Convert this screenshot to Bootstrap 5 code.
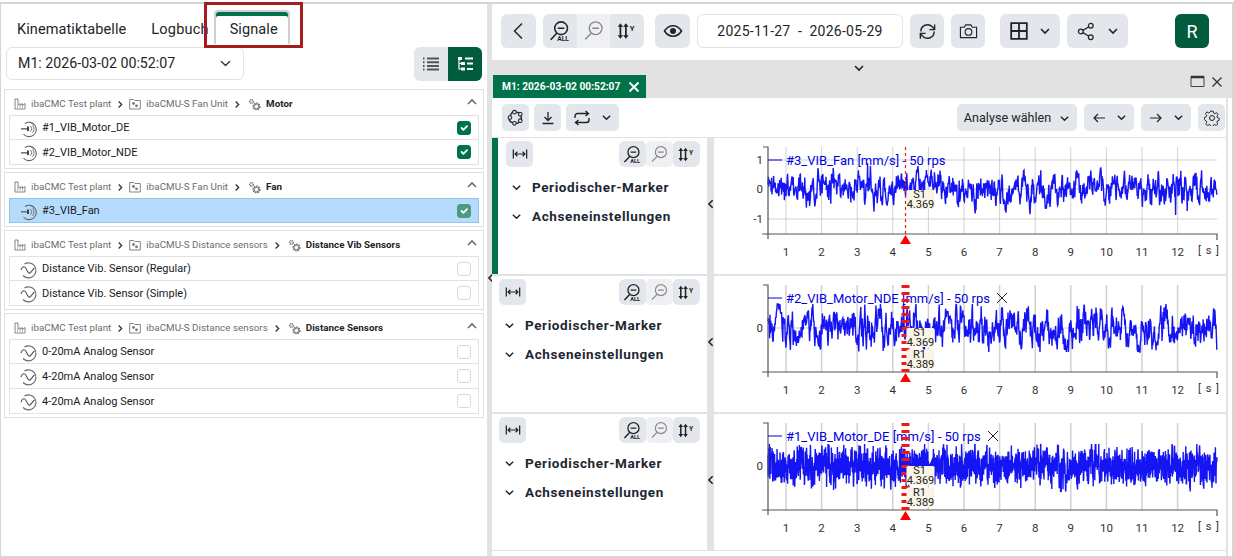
<!DOCTYPE html>
<html lang="de">
<head>
<meta charset="UTF-8">
<title>Signale</title>
<link href="https://cdn.jsdelivr.net/npm/bootstrap@5.3.3/dist/css/bootstrap.min.css" rel="stylesheet">
<style>
    html, body { width: 1234px; height: 558px; overflow: hidden; }
    body { font-family: Roboto, "Liberation Sans", sans-serif; color: #212529; background: #fff; }
    svg { display: block; }
    .app-shell { margin-top: 2px; height: 556px; border: 2px solid #d6d6d6; border-left-width: 1px; display: flex; }

    /* left side */
    .side-pane { width: 486px; flex: none; position: relative; padding: 0 3px 0 3px; }
    .side-tabs { height: 41px; padding: 6px 0 0 0; position: relative; }
    .side-tab { font-size: 14.5px; letter-spacing: .1px; color: #212529; padding: 9px 0 0 0; height: 34px; }
    .side-tab.first { padding-left: 13px; margin-right: 25px; }
    .side-tab.second { margin-right: 5px; letter-spacing: .2px; }
    .side-tab.on { width: 76px; text-align: center; border: 2px solid #cfcfcf; border-bottom: 0; border-radius: 4px 4px 0 0; box-shadow: inset 0 4px 0 #00734a; padding: 7px 0 0 4px; background: #fff; }
    .red-frame { position: absolute; left: 200px; top: -2px; width: 99px; height: 46px; border: 3px solid #a51c1c; pointer-events: none; }
    .picker-row { padding: 2px 2px 0 2px; height: 44px; margin-bottom: 0; }
    .run-select { width: 238px; height: 33px; font-size: 14.2px; padding: 0 11px; border-color: #e3e3e3; border-radius: 6px; color: #212529; background-position: right 12px center; background-size: 11px 11px; }
    .view-toggle { width: 68px; height: 34px; border-radius: 6px; overflow: hidden; }
    .view-toggle span { width: 34px; display: flex; align-items: center; justify-content: center; background: #e3e6ea; color: #555; }
    .view-toggle span.on { background: #005c3a; color: #fff; }
    .sig-group { border: 1px solid #e0e0e0; padding: 0 4px 3px 4px; margin: 0 0 3px 0; }
    .sig-crumb { height: 25px; font-size: 9.8px; letter-spacing: .03px; color: #6d6d6d; display: flex; align-items: center; padding: 3px 0 0 5px; gap: 5px; }
    .sig-crumb b { color: #212529; font-weight: 700; }
    .sig-crumb .arrow { color: #333; }
    .sig-crumb .step-icon { margin-left: 2px; }
    .sig-row { height: 25px; padding: 2px 7px 0 10px; display: flex; align-items: center; gap: 4px; font-size: 11px; border: 1px solid #e2e2e2; border-radius: 0 !important; color: #1a1a1a; margin: 0; }
    .sig-row.picked { background: #b5dcfd; border-color: #94c4e8; }
    .sig-row .form-check-input { margin: -2px 0 0 auto; width: 14px; height: 14px; border-radius: 3px; border-color: #d8d8d8; flex: none; }
    .sig-row .form-check-input:checked { background-color: #00734a; border-color: #00734a; }
    .sig-row.picked .form-check-input:checked { background-color: #4a9b80; border-color: #4a9b80; opacity: 1; }
    .fold-up { margin-left: auto; margin-right: 1px; margin-top: -5px; }
    .split-bar { width: 5px; flex: none; background: #e2e2e2; position: relative; }
    .split-bar svg { position: absolute; left: -1px; top: 268px; }

    /* top toolbar */
    .work-pane { flex: 1; min-width: 0; display: flex; flex-direction: column; }
    .top-bar { height: 56px; display: flex; align-items: flex-start; gap: 7px; padding: 10px 23px 0 9px; }
    .tool-btn { height: 34px; min-width: 34px; padding: 0; border: 0; background: #e3e6ea; color: #212529; border-radius: 6px; display: flex; align-items: center; justify-content: center; gap: 11px; }
    .tool-btn:hover { background: #e3e6ea; color: #212529; }
    .tool-btn.wider { min-width: 35px; }
    .tool-set { display: flex; border-radius: 6px; overflow: hidden; }
    .tool-set .tool-btn { border-radius: 0; }
    .tool-set .tool-btn.dim { background: #eef0f3; color: #888; min-width: 33px; }
    .date-box { width: 206px; height: 34px; border: 1px solid #e3e3e3; border-radius: 6px; display: flex; align-items: center; justify-content: center; font-size: 14px; letter-spacing: .25px; white-space: pre; }
    .gap-wide { margin-left: 4px; }
    .gap-more { margin-left: 8px; }
    .user-tile { width: 34px; height: 34px; border-radius: 6px; background: #005c3a; color: #fff; display: flex; align-items: center; justify-content: center; font-size: 18px; margin-left: auto; }

    /* tab strip */
    .work-area { flex: 1; background: #e2e2e2; display: flex; flex-direction: column; min-height: 0; padding-right: 6px; position: relative; }
    .tab-strip { height: 38px; position: relative; display: flex; align-items: flex-end; padding-left: 1px; }
    .strip-fold { position: absolute; left: 361px; top: 2px; }
    .run-tab { width: 153px; height: 23px; background: #00734a; color: #fff; font-size: 10.2px; font-weight: 700; display: flex; align-items: center; padding-left: 9px; gap: 8px; }
    .win-btns { margin-left: auto; margin-right: 3px; margin-bottom: 10px; display: flex; gap: 6px; align-items: center; color: #333; }
    .right-gutter { position: absolute; right: 0; top: 38px; bottom: 0; width: 4px; background: #fff; }

    /* sub toolbar */
    .sub-bar { height: 39px; background: #fff; display: flex; align-items: flex-start; gap: 5px; padding: 6px 1px 0 10px; }
    .sub-bar .tool-btn { height: 27px; min-width: 27px; border-radius: 5px; gap: 10px; }
    .sub-bar .pick { width: 120px; font-size: 12.6px; gap: 8px; margin-left: auto; padding-top: 1px; }
    .sub-bar .nav-pick { width: 50px; margin-left: 2px; }
    .sub-bar .gear { margin-left: 2px; }

    /* chart rows */
    .chart-row { height: 136px; display: flex; margin-top: 2px; flex: none; }
    .chart-row.first { margin-top: 1px; }
    .ctrl-pane { width: 215px; flex: none; background: #fff; padding: 3px 7px 0 7px; position: relative; }
    .chart-row.first .ctrl-pane { border-left: 6px solid #00734a; padding-left: 8px; }
    .ctrl-head { display: flex; justify-content: space-between; align-items: flex-start; }
    .ctrl-head .tool-btn { height: 26px; min-width: 27px; border-radius: 5px; }
    .ctrl-head .tool-set .tool-btn { min-width: 27px; }
    .ctrl-item { display: flex; align-items: center; height: 29px; font-size: 13.5px; font-weight: 700; letter-spacing: .6px; gap: 10px; padding-left: 5px; color: #1d2731; }
    .ctrl-list { margin-top: 6px; }
    .pane-fold { position: absolute; right: -9px; top: 60px; color: #222; }
    .plot-pane { margin-left: 7px; flex: 1; background: #fff; min-width: 0; }
    .plot-text { font-family: Roboto, "Liberation Sans", sans-serif; }
    .tail-strip { height: 5px; margin-top: 1px; background: #fff; flex: none; }
</style>
</head>
<body>

<svg width="0" height="0" class="position-absolute">
    <symbol id="i-chev-down" viewBox="0 0 12 12"><path d="M2 4l4 4 4-4" fill="none" stroke="currentColor" stroke-width="1.6"/></symbol>
    <symbol id="i-chev-up" viewBox="0 0 12 12"><path d="M2 8l4-4 4 4" fill="none" stroke="currentColor" stroke-width="1.6"/></symbol>
    <symbol id="i-chev-left" viewBox="0 0 12 12"><path d="M8 1.500L3.500 6 8 10.500" fill="none" stroke="currentColor" stroke-width="1.900"/></symbol>
    <symbol id="i-back" viewBox="0 0 12 12"><path d="M8 1L3 6l5 5" fill="none" stroke="currentColor" stroke-width="1"/></symbol>
    <symbol id="i-chev-right" viewBox="0 0 12 12"><path d="M4 1.500L8.500 6 4 10.500" fill="none" stroke="currentColor" stroke-width="2"/></symbol>
    <symbol id="i-zoom-all" viewBox="0 0 20 20"><circle cx="11" cy="7.500" r="5.800" fill="none" stroke="currentColor" stroke-width="1.400"/><path d="M8 7.500h6M7 12L1.500 18" fill="none" stroke="currentColor" stroke-width="1.500"/><text x="7.500" y="19" font-size="6" font-weight="700" fill="currentColor" font-family="Roboto, sans-serif">ALL</text></symbol>
    <symbol id="i-zoom-out" viewBox="0 0 20 20"><circle cx="11.500" cy="7.500" r="5.800" fill="none" stroke="currentColor" stroke-width="1.200"/><path d="M8.500 7.500h6M7.500 12L2 17.500" fill="none" stroke="currentColor" stroke-width="1.300"/></symbol>
    <symbol id="i-scale-y" viewBox="0 0 20 20"><path d="M4 3l-2.500 3.200h1.700v7.600H1.500L4 17l2.500-3.200H4.800V6.200h1.700zM9 3L6.500 6.200h1.700v7.600H6.500L9 17l2.500-3.200H9.800V6.200h1.700z" fill="currentColor"/><text x="12.500" y="10" font-size="7" font-weight="700" fill="currentColor" font-family="Roboto, sans-serif">Y</text></symbol>
    <symbol id="i-eye" viewBox="0 0 20 20"><path d="M1.500 10C4 6 7 4.800 10 4.800S16 6 18.500 10C16 14 13 15.200 10 15.200S4 14 1.500 10z" fill="none" stroke="currentColor" stroke-width="1.600"/><circle cx="10" cy="10" r="3" fill="currentColor"/></symbol>
    <symbol id="i-refresh" viewBox="0 0 20 20"><path d="M3 10a7 7 0 0 1 12-5l2 2M17 10a7 7 0 0 1-12 5l-2-2" fill="none" stroke="currentColor" stroke-width="1.500"/><path d="M17.500 2.500V8h-5.500M2.500 17.500V12H8" fill="none" stroke="currentColor" stroke-width="1.500"/></symbol>
    <symbol id="i-camera" viewBox="0 0 20 20"><path d="M1.500 5.500h4l1.500-2.500h5.500l1.500 2.500h4.500v11h-17z" fill="none" stroke="currentColor" stroke-width="1.200"/><circle cx="10" cy="10.500" r="3.500" fill="none" stroke="currentColor" stroke-width="1.200"/></symbol>
    <symbol id="i-grid" viewBox="0 0 18 18"><path d="M1.200 1.200h15.600v15.600H1.200zM9 1.200v15.600M1.200 9h15.600" fill="none" stroke="currentColor" stroke-width="1.800"/></symbol>
    <symbol id="i-share" viewBox="0 0 20 20"><circle cx="4" cy="10" r="2.500" fill="none" stroke="currentColor" stroke-width="1.300"/><circle cx="14.500" cy="4" r="2.500" fill="none" stroke="currentColor" stroke-width="1.300"/><circle cx="14.500" cy="16" r="2.500" fill="none" stroke="currentColor" stroke-width="1.300"/><path d="M6.200 8.800l6-3.500M6.200 11.200l6 3.500" stroke="currentColor" stroke-width="1.300"/></symbol>
    <symbol id="i-close" viewBox="0 0 12 12"><path d="M1.500 1.500l9 9M10.500 1.500l-9 9" fill="none" stroke="currentColor" stroke-width="1.300"/></symbol>
    <symbol id="i-close-bold" viewBox="0 0 12 12"><path d="M1.500 1.500l9 9M10.500 1.500l-9 9" fill="none" stroke="currentColor" stroke-width="1.900"/></symbol>
    <symbol id="i-model" viewBox="0 0 16 16"><path d="M7 2.500c2 1 4 .5 5.500 1.500s.5 3 1 5-1.500 3-3 4-3 .5-5 0-3.500-2-3.500-4 1-3 2-4.500 1.500-2.500 3-2z" fill="none" stroke="currentColor" stroke-width="1.300"/><g fill="#e3e6ea" stroke="currentColor"><circle cx="7" cy="3" r="1.700"/><circle cx="12.500" cy="5" r="1.700"/><circle cx="12.500" cy="11" r="1.700"/><circle cx="7" cy="13.500" r="1.700"/><circle cx="2.800" cy="8" r="1.700"/></g></symbol>
    <symbol id="i-download" viewBox="0 0 16 16"><path d="M8 2v8M4.500 7L8 10.500 11.500 7M2.500 13.500h11" fill="none" stroke="currentColor" stroke-width="1.300"/></symbol>
    <symbol id="i-cycle" viewBox="0 0 18 18"><path d="M2 9V7a2.500 2.500 0 0 1 2.500-2.500H15M12.500 2L15.500 4.500 12.500 7M16 9v2a2.500 2.500 0 0 1-2.500 2.500H3M5.500 11L2.500 13.500 5.500 16" fill="none" stroke="currentColor" stroke-width="1.400"/></symbol>
    <symbol id="i-arrow-left" viewBox="0 0 14 12"><path d="M13 6H2M6 2L2 6l4 4" fill="none" stroke="currentColor" stroke-width="1.200"/></symbol>
    <symbol id="i-arrow-right" viewBox="0 0 14 12"><path d="M1 6h11M8 2l4 4-4 4" fill="none" stroke="currentColor" stroke-width="1.200"/></symbol>
    <symbol id="i-gear" viewBox="0 0 16 16"><path d="M6.800 1h2.400l.4 2 1.500.7 1.800-1 1.500 1.800-1.200 1.700.4 1.600 1.900.6v2.300l-1.900.6-.5 1.500 1 1.700-1.600 1.600-1.700-1-1.500.6-.5 1.900H6.800l-.5-1.900-1.500-.6-1.700 1-1.600-1.600 1-1.700-.5-1.500L.1 9.900V7.600L2 7l.4-1.600L1.200 3.700 2.700 1.900l1.800 1 1.500-.7z" transform="scale(.96) translate(.3 .1)" fill="none" stroke="currentColor" stroke-width="1"/><circle cx="8" cy="8" r="2.500" fill="none" stroke="currentColor"/></symbol>
    <symbol id="i-fit" viewBox="0 0 18 18"><path d="M1.500 4v10M16.500 4v10M3.500 9h11M6 6.500L3.500 9 6 11.500M12 6.500L14.500 9 12 11.500" fill="none" stroke="currentColor" stroke-width="1.400"/></symbol>
    <symbol id="i-list" viewBox="0 0 18 18"><path d="M5 3.500h12M5 7.200h12M5 10.900h12M5 14.600h12" stroke="currentColor" stroke-width="2"/><path d="M1 3.500h2M1 7.200h2M1 10.900h2M1 14.600h2" stroke="currentColor" stroke-width="2" stroke-dasharray="1 .5"/></symbol>
    <symbol id="i-tree" viewBox="0 0 18 18"><path d="M2 2h4v3H2zM5 7h4v3H5zM5 12.500h4v3H5z" fill="currentColor"/><path d="M3 5v9h3M3 8.500h3" fill="none" stroke="currentColor" stroke-width="1.200"/><path d="M9 3.500h8M11 8.500h6M11 14h6" stroke="currentColor" stroke-width="2"/></symbol>
    <symbol id="i-plant" viewBox="0 0 12 12"><path d="M1 1v10h10V5.500l-2.500 2V5.500L6 7.500V5.500l-2 2V1z" fill="none" stroke="#777" stroke-width=".9"/><path d="M3 9h1M5.500 9h1M8 9h1" stroke="#777"/></symbol>
    <symbol id="i-unit" viewBox="0 0 12 12"><path d="M.7 1.500h4l1 1h5.600v8.500H.7z" fill="none" stroke="#777" stroke-width=".9"/><circle cx="4.500" cy="5.500" r="1.400" fill="#777"/><circle cx="7.500" cy="7.800" r="1.400" fill="#777"/></symbol>
    <symbol id="i-gears" viewBox="0 0 13 13"><circle cx="3.500" cy="3.500" r="1.700" fill="none" stroke="#777" stroke-width="1.500" stroke-dasharray="1 .5"/><circle cx="8.500" cy="8.500" r="2.800" fill="none" stroke="#666" stroke-width="2.400" stroke-dasharray="1.400 .7"/></symbol>
    <symbol id="i-vib" viewBox="0 0 18 18"><path d="M5 3.500a7.200 7.200 0 1 1-1.500 10.500" fill="none" stroke="#666" stroke-width="1.100"/><path d="M1 8.800h6" stroke="#777" stroke-width="1.600"/><path d="M8 6.500v4.600" stroke="#444" stroke-width="2"/><path d="M10.500 6a4 4 0 0 1 0 5.600M12.500 4.800a6 6 0 0 1 0 8" fill="none" stroke="#777"/></symbol>
    <symbol id="i-wave" viewBox="0 0 18 18"><path d="M4.500 3a7.500 7.500 0 1 1-1.500 11.500" fill="none" stroke="#666" stroke-width="1.100"/><path d="M1 9c1.500-4 3.500-4 5-1.500s2.500 6 4.500 4 2-3 4-4.500" fill="none" stroke="#555" stroke-width="1.100"/></symbol>
</svg>

<div class="app-shell">
    <aside class="side-pane">
        <div class="side-tabs d-flex">
            <div class="side-tab first">Kinematiktabelle</div>
            <div class="side-tab second">Logbuch</div>
            <div class="side-tab on">Signale</div>
            <div class="red-frame"></div>
        </div>
        <div class="picker-row d-flex justify-content-between">
            <select class="form-select run-select"><option>M1: 2026-03-02 00:52:07</option></select>
            <div class="view-toggle d-flex">
                <span><svg width="18" height="18"><use href="#i-list"/></svg></span>
                <span class="on"><svg width="18" height="18"><use href="#i-tree"/></svg></span>
            </div>
        </div>

        <div class="sig-group">
            <div class="sig-crumb">
                <svg width="12" height="12"><use href="#i-plant"/></svg><span>ibaCMC Test plant</span>
                <svg class="arrow" width="8" height="9"><use href="#i-chev-right"/></svg>
                <svg width="12" height="12"><use href="#i-unit"/></svg><span>ibaCMU-S Fan Unit</span>
                <svg class="arrow" width="8" height="9"><use href="#i-chev-right"/></svg>
                <svg class="step-icon" width="13" height="13"><use href="#i-gears"/></svg><b>Motor</b>
                <svg class="fold-up" width="12" height="12"><use href="#i-chev-up"/></svg>
            </div>
            <div class="list-group">
                <label class="list-group-item sig-row"><svg width="18" height="18"><use href="#i-vib"/></svg>#1_VIB_Motor_DE<input class="form-check-input" type="checkbox" checked></label>
                <label class="list-group-item sig-row"><svg width="18" height="18"><use href="#i-vib"/></svg>#2_VIB_Motor_NDE<input class="form-check-input" type="checkbox" checked></label>
            </div>
        </div>

        <div class="sig-group">
            <div class="sig-crumb">
                <svg width="12" height="12"><use href="#i-plant"/></svg><span>ibaCMC Test plant</span>
                <svg class="arrow" width="8" height="9"><use href="#i-chev-right"/></svg>
                <svg width="12" height="12"><use href="#i-unit"/></svg><span>ibaCMU-S Fan Unit</span>
                <svg class="arrow" width="8" height="9"><use href="#i-chev-right"/></svg>
                <svg class="step-icon" width="13" height="13"><use href="#i-gears"/></svg><b>Fan</b>
                <svg class="fold-up" width="12" height="12"><use href="#i-chev-up"/></svg>
            </div>
            <div class="list-group">
                <label class="list-group-item sig-row picked"><svg width="18" height="18"><use href="#i-vib"/></svg>#3_VIB_Fan<input class="form-check-input" type="checkbox" checked></label>
            </div>
        </div>

        <div class="sig-group">
            <div class="sig-crumb">
                <svg width="12" height="12"><use href="#i-plant"/></svg><span>ibaCMC Test plant</span>
                <svg class="arrow" width="8" height="9"><use href="#i-chev-right"/></svg>
                <svg width="12" height="12"><use href="#i-unit"/></svg><span>ibaCMU-S Distance sensors</span>
                <svg class="arrow" width="8" height="9"><use href="#i-chev-right"/></svg>
                <svg class="step-icon" width="13" height="13"><use href="#i-gears"/></svg><b>Distance Vib Sensors</b>
                <svg class="fold-up" width="12" height="12"><use href="#i-chev-up"/></svg>
            </div>
            <div class="list-group">
                <label class="list-group-item sig-row"><svg width="18" height="18"><use href="#i-wave"/></svg>Distance Vib. Sensor (Regular)<input class="form-check-input" type="checkbox"></label>
                <label class="list-group-item sig-row"><svg width="18" height="18"><use href="#i-wave"/></svg>Distance Vib. Sensor (Simple)<input class="form-check-input" type="checkbox"></label>
            </div>
        </div>

        <div class="sig-group">
            <div class="sig-crumb">
                <svg width="12" height="12"><use href="#i-plant"/></svg><span>ibaCMC Test plant</span>
                <svg class="arrow" width="8" height="9"><use href="#i-chev-right"/></svg>
                <svg width="12" height="12"><use href="#i-unit"/></svg><span>ibaCMU-S Distance sensors</span>
                <svg class="arrow" width="8" height="9"><use href="#i-chev-right"/></svg>
                <svg class="step-icon" width="13" height="13"><use href="#i-gears"/></svg><b>Distance Sensors</b>
                <svg class="fold-up" width="12" height="12"><use href="#i-chev-up"/></svg>
            </div>
            <div class="list-group">
                <label class="list-group-item sig-row"><svg width="18" height="18"><use href="#i-wave"/></svg>0-20mA Analog Sensor<input class="form-check-input" type="checkbox"></label>
                <label class="list-group-item sig-row"><svg width="18" height="18"><use href="#i-wave"/></svg>4-20mA Analog Sensor<input class="form-check-input" type="checkbox"></label>
                <label class="list-group-item sig-row"><svg width="18" height="18"><use href="#i-wave"/></svg>4-20mA Analog Sensor<input class="form-check-input" type="checkbox"></label>
            </div>
        </div>
    </aside>

    <div class="split-bar"><svg width="10" height="12"><use href="#i-chev-left"/></svg></div>

    <main class="work-pane">
        <div class="top-bar">
            <button class="btn tool-btn wider"><svg width="18" height="18"><use href="#i-back"/></svg></button>
            <div class="tool-set">
                <button class="btn tool-btn"><svg width="22" height="22"><use href="#i-zoom-all"/></svg></button>
                <button class="btn tool-btn dim"><svg width="22" height="22"><use href="#i-zoom-out"/></svg></button>
                <button class="btn tool-btn"><svg width="22" height="22"><use href="#i-scale-y"/></svg></button>
            </div>
            <button class="btn tool-btn wider gap-wide"><svg width="20" height="20"><use href="#i-eye"/></svg></button>
            <div class="date-box">2025-11-27  -  2026-05-29</div>
            <button class="btn tool-btn"><svg width="19" height="19"><use href="#i-refresh"/></svg></button>
            <button class="btn tool-btn"><svg width="19" height="19"><use href="#i-camera"/></svg></button>
            <button class="btn tool-btn gap-more" style="width: 60px"><svg width="18" height="18"><use href="#i-grid"/></svg><svg width="12" height="12"><use href="#i-chev-down"/></svg></button>
            <button class="btn tool-btn" style="width: 61px"><svg width="19" height="19"><use href="#i-share"/></svg><svg width="12" height="12"><use href="#i-chev-down"/></svg></button>
            <div class="user-tile">R</div>
        </div>

        <div class="work-area">
            <div class="tab-strip">
                <svg class="strip-fold" width="12" height="12"><use href="#i-chev-down"/></svg>
                <div class="run-tab">M1: 2026-03-02 00:52:07 <svg width="12" height="12"><use href="#i-close-bold"/></svg></div>
                <div class="win-btns">
                    <svg width="15" height="13"><path d="M1 1.500h13v10H1z" fill="none" stroke="#444" stroke-width="1"/><path d="M1 2h13" stroke="#333" stroke-width="2.500"/></svg>
                    <svg width="12" height="12"><use href="#i-close"/></svg>
                </div>
            </div>
            <div class="right-gutter"></div>

            <div class="sub-bar">
                <button class="btn tool-btn"><svg width="17" height="17"><use href="#i-model"/></svg></button>
                <button class="btn tool-btn"><svg width="16" height="16"><use href="#i-download"/></svg></button>
                <button class="btn tool-btn" style="width: 53px"><svg width="18" height="18"><use href="#i-cycle"/></svg><svg width="11" height="11"><use href="#i-chev-down"/></svg></button>
                <button class="btn tool-btn pick">Analyse wählen<svg width="11" height="11"><use href="#i-chev-down"/></svg></button>
                <button class="btn tool-btn nav-pick"><svg width="14" height="12"><use href="#i-arrow-left"/></svg><svg width="11" height="11"><use href="#i-chev-down"/></svg></button>
                <button class="btn tool-btn nav-pick"><svg width="14" height="12"><use href="#i-arrow-right"/></svg><svg width="11" height="11"><use href="#i-chev-down"/></svg></button>
                <button class="btn tool-btn gear"><svg width="16" height="16"><use href="#i-gear"/></svg></button>
            </div>

            <div class="chart-row first" data-chart="0">
                <div class="ctrl-pane">
                    <div class="ctrl-head">
                        <button class="btn tool-btn"><svg width="16" height="16"><use href="#i-fit"/></svg></button>
                        <div class="tool-set">
                            <button class="btn tool-btn"><svg width="19" height="19"><use href="#i-zoom-all"/></svg></button>
                            <button class="btn tool-btn dim"><svg width="19" height="19"><use href="#i-zoom-out"/></svg></button>
                            <button class="btn tool-btn"><svg width="19" height="19"><use href="#i-scale-y"/></svg></button>
                        </div>
                    </div>
                    <div class="ctrl-list">
                        <div class="ctrl-item"><svg width="11" height="11"><use href="#i-chev-down"/></svg>Periodischer-Marker</div>
                        <div class="ctrl-item"><svg width="11" height="11"><use href="#i-chev-down"/></svg>Achseneinstellungen</div>
                    </div>
                    <svg class="pane-fold" width="10" height="12"><use href="#i-chev-left"/></svg>
                </div>
                <div class="plot-pane"></div>
            </div>
            <div class="chart-row" data-chart="1">
                <div class="ctrl-pane">
                    <div class="ctrl-head">
                        <button class="btn tool-btn"><svg width="16" height="16"><use href="#i-fit"/></svg></button>
                        <div class="tool-set">
                            <button class="btn tool-btn"><svg width="19" height="19"><use href="#i-zoom-all"/></svg></button>
                            <button class="btn tool-btn dim"><svg width="19" height="19"><use href="#i-zoom-out"/></svg></button>
                            <button class="btn tool-btn"><svg width="19" height="19"><use href="#i-scale-y"/></svg></button>
                        </div>
                    </div>
                    <div class="ctrl-list">
                        <div class="ctrl-item"><svg width="11" height="11"><use href="#i-chev-down"/></svg>Periodischer-Marker</div>
                        <div class="ctrl-item"><svg width="11" height="11"><use href="#i-chev-down"/></svg>Achseneinstellungen</div>
                    </div>
                    <svg class="pane-fold" width="10" height="12"><use href="#i-chev-left"/></svg>
                </div>
                <div class="plot-pane"></div>
            </div>
            <div class="chart-row" data-chart="2">
                <div class="ctrl-pane">
                    <div class="ctrl-head">
                        <button class="btn tool-btn"><svg width="16" height="16"><use href="#i-fit"/></svg></button>
                        <div class="tool-set">
                            <button class="btn tool-btn"><svg width="19" height="19"><use href="#i-zoom-all"/></svg></button>
                            <button class="btn tool-btn dim"><svg width="19" height="19"><use href="#i-zoom-out"/></svg></button>
                            <button class="btn tool-btn"><svg width="19" height="19"><use href="#i-scale-y"/></svg></button>
                        </div>
                    </div>
                    <div class="ctrl-list">
                        <div class="ctrl-item"><svg width="11" height="11"><use href="#i-chev-down"/></svg>Periodischer-Marker</div>
                        <div class="ctrl-item"><svg width="11" height="11"><use href="#i-chev-down"/></svg>Achseneinstellungen</div>
                    </div>
                    <svg class="pane-fold" width="10" height="12"><use href="#i-chev-left"/></svg>
                </div>
                <div class="plot-pane"></div>
            </div>
            <div class="tail-strip"></div>
        </div>
    </main>
</div>

<script>
    // plot pane starts at page x=714, each chart is drawn in local coordinates
    const charts = [
        { title: "#3_VIB_Fan [mm/s] - 50 rps", top: 9, axis: 96, zero: 51, grids: [22, 51, 81], labels: [["1", 22], ["0", 51], ["-1", 81]], slow: 24, fast: 11, kick: 18, dx: .4, up: 31, down: 26, seed: 11, spike: .006, thin: true, flags: [["S1", "4.369"]], closeAt: 0 },
        { title: "#2_VIB_Motor_NDE [mm/s] - 50 rps", top: 9, axis: 96, zero: 52, grids: [52], labels: [["0", 52]], slow: 30, fast: 12, kick: 8, dx: .4, up: 24, down: 24, seed: 29, spike: .005, thin: false, flags: [["S1", "4.369"], ["R1", "4.389"]], closeAt: 288 },
        { title: "#1_VIB_Motor_DE [mm/s] - 50 rps", top: 9, axis: 96, zero: 52, grids: [52], labels: [["0", 52]], slow: 15, fast: 30, kick: 8, dx: .2, up: 22, down: 26, seed: 47, spike: .02, thin: false, flags: [["S1", "4.369"], ["R1", "4.389"]], closeAt: 279 }
    ];

    function makeRandom(seed) {
        let s = seed;
        return function () {
            s = (s * 16807) % 2147483647;
            return s / 2147483647;
        };
    }

    function signalPoints(c) {
        const rnd = makeRandom(c.seed * 1000 + 7);
        let a = 0;
        let pts = [];
        for (let x = 54; x <= 503; x += c.dx) {
            a = .7 * a + (rnd() - .5) * c.slow * .75;
            let y = a * 1.1 + (rnd() - .5) * c.fast;
            if (rnd() < c.spike) y += (rnd() < .7 ? 1 : -1) * c.kick;
            y = Math.max(-c.up, Math.min(c.down, y));
            pts.push(x.toFixed(1) + "," + (c.zero + y).toFixed(1));
        }
        return pts.join(" ");
    }

    function drawChart(c) {
        const x0 = 54, xEnd = 503, step = 35.6, firstTick = 72, marker = 191.5;
        let s = `<svg class="plot-text" width="512" height="136">`;
        for (let i = 0; i < 12; i++) {
            const tx = firstTick + i * step;
            s += `<line x1="${tx}" y1="${c.top}" x2="${tx}" y2="${c.axis}" stroke="#d2d2d2" stroke-width="${c.thin ? 1 : 1.500}"/>`;
            s += `<text x="${tx}" y="${c.axis + 22}" text-anchor="middle" font-size="11.500" fill="#333">${i + 1}</text>`;
        }
        c.grids.forEach(g => s += `<line x1="${x0}" y1="${g}" x2="${xEnd}" y2="${g}" stroke="#cfcfcf"/>`);
        s += `<polyline points="${signalPoints(c)}" fill="none" stroke="#1414f5" stroke-width="1.400"/>`;
        s += `<path d="M${x0 - 5} ${c.top}h5V${c.axis + 5}M${x0 - 6} ${c.axis}H${xEnd}v6" fill="none" stroke="#555" stroke-width="1.200"/>`;
        c.labels.forEach(l => s += `<text x="${x0 - 5}" y="${l[1] + 4}" text-anchor="end" font-size="11.500" fill="#333">${l[0]}</text>`);
        s += `<line x1="${x0}" y1="22" x2="${x0 + 14}" y2="22" stroke="#0000e6"/>`;
        s += `<text x="72" y="27" font-size="13" fill="#0000e6">${c.title}</text>`;
        if (c.thin) {
            s += `<line x1="${marker}" y1="${c.top}" x2="${marker}" y2="${c.axis}" stroke="#f01818" stroke-dasharray="3 3" stroke-width="1.200"/>`;
        } else {
            s += `<line x1="${marker}" y1="${c.top}" x2="${marker}" y2="${c.axis}" stroke="#f01818" stroke-dasharray="3 4" stroke-width="8"/>`;
        }
        s += `<path d="M${marker - 5.500} ${c.axis + 10}L${marker} ${c.axis + 1}l5.500 9z" fill="#f00"/>`;
        c.flags.forEach((f, i) => {
            const fy = 52 + i * 21.500;
            s += `<rect x="${marker + 1}" y="${fy}" width="28" height="19" rx="1.500" fill="#f8f4e6"/>`;
            s += `<text x="${marker + 14}" y="${fy + 8}" text-anchor="middle" font-size="11" fill="#222">${f[0]}</text>`;
            s += `<text x="${marker + 15}" y="${fy + 18}" text-anchor="middle" font-size="11" fill="#222">${f[1]}</text>`;
        });
        if (c.closeAt) {
            s += `<path d="M${c.closeAt - 5} 17l10 10M${c.closeAt + 5} 17l-10 10" stroke="#222" fill="none"/>`;
        }
        s += `<text x="484" y="${c.axis + 20}" font-size="11" letter-spacing="1" fill="#333">[ s ]</text>`;
        return s + `</svg>`;
    }

    document.querySelectorAll("[data-chart]").forEach(row => {
        row.querySelector(".plot-pane").innerHTML = drawChart(charts[+row.dataset.chart]);
    });
</script>
</body>
</html>
